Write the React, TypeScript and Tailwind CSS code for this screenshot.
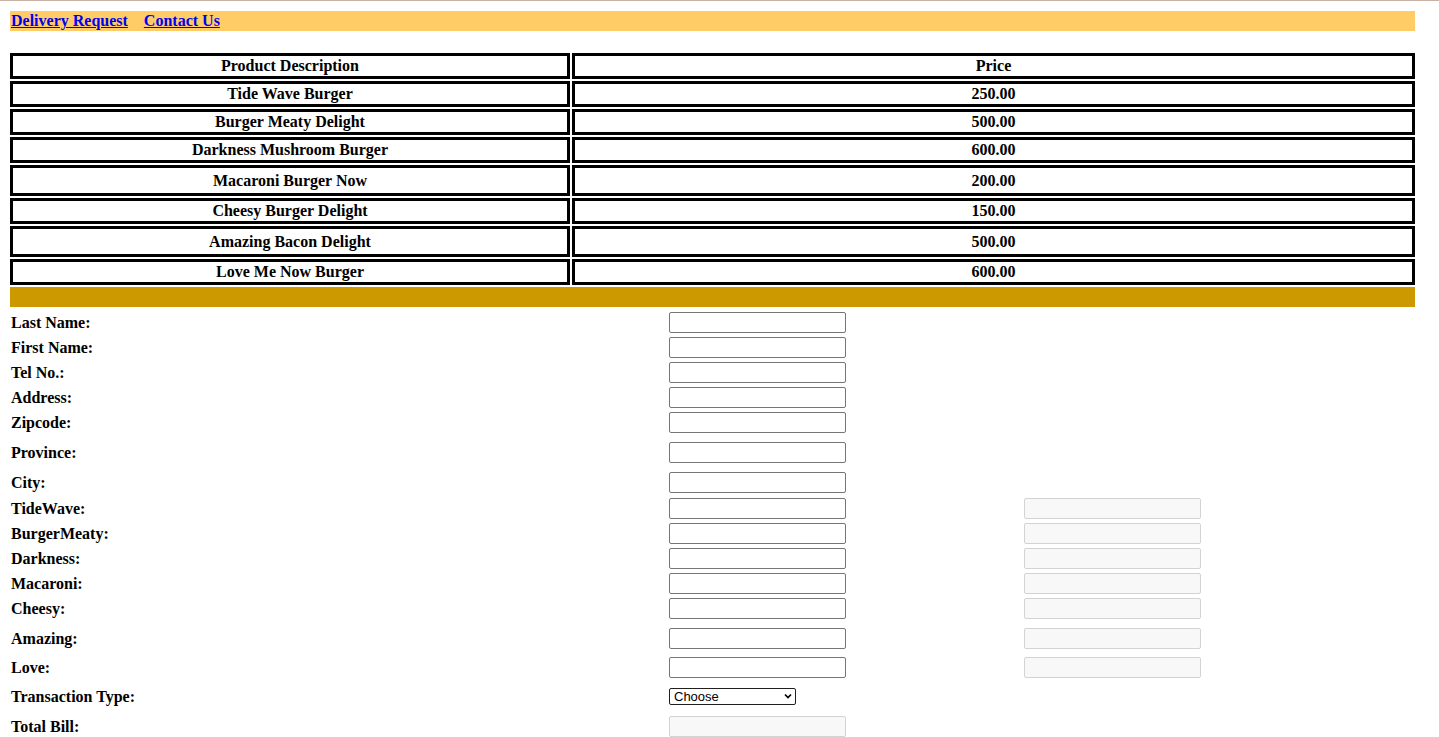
import React from 'react';

const PRODUCTS: [string, string, number][] = [
  ['Tide Wave Burger', '250.00', 26],
  ['Burger Meaty Delight', '500.00', 26],
  ['Darkness Mushroom Burger', '600.00', 26],
  ['Macaroni Burger Now', '200.00', 31],
  ['Cheesy Burger Delight', '150.00', 26],
  ['Amazing Bacon Delight', '500.00', 31],
  ['Love Me Now Burger', '600.00', 26],
];

type Row = { label: string; gap: string; kind: 'text' | 'select' | 'off'; qty?: boolean };

// gaps are written out so tailwind picks them up
const ROWS: Row[] = [
  { label: 'Last Name:', gap: 'mt-[5px]', kind: 'text' },
  { label: 'First Name:', gap: 'mt-[4px]', kind: 'text' },
  { label: 'Tel No.:', gap: 'mt-[4px]', kind: 'text' },
  { label: 'Address:', gap: 'mt-[4px]', kind: 'text' },
  { label: 'Zipcode:', gap: 'mt-[4px]', kind: 'text' },
  { label: 'Province:', gap: 'mt-[9px]', kind: 'text' },
  { label: 'City:', gap: 'mt-[9px]', kind: 'text' },
  { label: 'TideWave:', gap: 'mt-[5px]', kind: 'text', qty: true },
  { label: 'BurgerMeaty:', gap: 'mt-[4px]', kind: 'text', qty: true },
  { label: 'Darkness:', gap: 'mt-[4px]', kind: 'text', qty: true },
  { label: 'Macaroni:', gap: 'mt-[4px]', kind: 'text', qty: true },
  { label: 'Cheesy:', gap: 'mt-[4px]', kind: 'text', qty: true },
  { label: 'Amazing:', gap: 'mt-[9px]', kind: 'text', qty: true },
  { label: 'Love:', gap: 'mt-[8px]', kind: 'text', qty: true },
  { label: 'Transaction Type:', gap: 'mt-[8px]', kind: 'select' },
  { label: 'Total Bill:', gap: 'mt-[9px]', kind: 'off' },
  { label: 'Cash:', gap: 'mt-[9px]', kind: 'text' },
  { label: 'Change:', gap: 'mt-[9px]', kind: 'off' },
];

const textBox = 'block w-[177px] h-[21px] border border-[#767676] rounded-[2px] bg-white px-[2px] text-[13px] font-normal font-["Liberation_Sans",Arial,sans-serif]';
const offBox = 'block w-[177px] h-[21px] border border-[#d3d3d3] rounded-[2px] bg-[#f8f8f8] px-[2px] text-[13px] font-normal font-["Liberation_Sans",Arial,sans-serif]';

function Field({ kind }: { kind: Row['kind'] }) {
  if (kind === 'select') {
    return (
      <div className="relative w-[127px] h-[17px]">
        <select className="block w-[127px] h-[17px] appearance-none border border-[#1f1f1f] rounded-[2px] bg-white pl-[4px] text-[13px] leading-[15px] font-normal text-black font-['Liberation_Sans',Arial,sans-serif]">
          <option>Choose</option>
          <option>Delivery</option>
          <option>Pick Up</option>
        </select>
        <svg className="absolute right-[4px] top-[5px] w-[8px] h-[7px] pointer-events-none" viewBox="0 0 8 7">
          <path d="M1 1.5 L4 4.5 L7 1.5" fill="none" stroke="#000" strokeWidth="1.7" />
        </svg>
      </div>
    );
  }
  if (kind === 'off') return <input disabled className={offBox} />;
  return <input type="text" className={textBox} />;
}

export default function App() {
  return (
    <div className="min-h-screen bg-white text-black font-['Liberation_Serif','Times_New_Roman',serif] text-[16px]">
      <div className="h-px bg-[#c9b0a6]" />

      <div className="pl-[10px] pb-[150px]">
        <div className="mt-[10px] w-[1405px] h-[20px] bg-[#ffcc66] flex items-center gap-[16px] pl-px font-bold">
          <a href="#" className="text-[#0000ee] underline leading-none">Delivery Request</a>
          <a href="#" className="text-[#0000ee] underline leading-none">Contact Us</a>
        </div>

        <div className="mt-[22px] w-[1405px] flex flex-col gap-[2px] font-bold">
          <div className="flex gap-[2px] h-[26px]">
            <div className="w-[560px] border-[3px] border-black flex items-center justify-center">Product Description</div>
            <div className="flex-1 border-[3px] border-black flex items-center justify-center">Price</div>
          </div>
          {PRODUCTS.map(([name, price, h]) => (
            <div key={name} className={h === 31 ? 'flex gap-[2px] h-[31px]' : 'flex gap-[2px] h-[26px]'}>
              <div className="w-[560px] border-[3px] border-black flex items-center justify-center">{name}</div>
              <div className="flex-1 border-[3px] border-black flex items-center justify-center">{price}</div>
            </div>
          ))}
          <div className="h-[20px] bg-[#cc9900]" />
        </div>

        <form className="font-bold" onSubmit={e => e.preventDefault()}>
          {ROWS.map(r => (
            <div key={r.label} className={`${r.gap} flex items-center h-[21px]`}>
              <div className="w-[659px] pl-px">{r.label}</div>
              <Field kind={r.kind} />
              {r.qty && <input disabled className={`${offBox} ml-[178px]`} />}
            </div>
          ))}
          <div className="mt-[14px] flex gap-2 pl-[659px] font-normal">
            <button type="button" className="border border-[#767676] rounded-[2px] bg-[#efefef] px-[6px] h-[21px] text-[13px] font-['Liberation_Sans',Arial,sans-serif]">Compute</button>
            <button type="reset" className="border border-[#767676] rounded-[2px] bg-[#efefef] px-[6px] h-[21px] text-[13px] font-['Liberation_Sans',Arial,sans-serif]">Reset</button>
            <button type="submit" className="border border-[#767676] rounded-[2px] bg-[#efefef] px-[6px] h-[21px] text-[13px] font-['Liberation_Sans',Arial,sans-serif]">Submit</button>
          </div>
        </form>
      </div>
    </div>
  );
}
